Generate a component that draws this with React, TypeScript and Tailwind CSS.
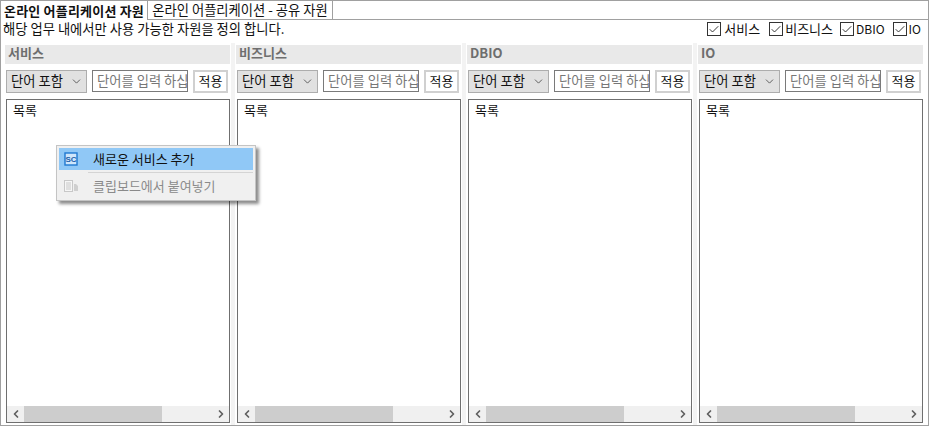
import React from "react";
import { ChevronDown, ChevronLeft, ChevronRight, Check } from "lucide-react";

const font = { fontFamily: '"Noto Sans CJK KR", "Liberation Sans", sans-serif' };

function Panel({ title }: { title: string }) {
  return (
    <div className="flex w-[225px] shrink-0 flex-col">
      <div className="flex h-[19px] items-center bg-[#e9e9e9] pb-[3px] pl-[3px] text-[13px] font-bold text-[#6e6e6e]">{title}</div>
      <div className="mt-[6px] flex h-[23px] pl-px">
        <div className="flex w-[81px] items-center justify-between border border-[#adadad] bg-[#e1e1e1] pb-px pl-[4px] pr-[3px] text-[13.3px] text-[#111]">
          <span>단어 포함</span>
          <ChevronDown size={13} strokeWidth={1.5} className="text-[#444]" />
        </div>
        <input
          readOnly
          placeholder="단어를 입력 하십시오"
          className="ml-[5px] h-[22px] w-[96px] border border-[#7a7a7a] bg-white pb-px pl-[4px] text-[13.3px] placeholder:text-[#777]"
        />
        <div className="ml-[5px] flex h-[23px] w-[35px] items-center justify-center border-2 border-[#d0d0d0] bg-white pb-px text-[13px] text-[#111]">적용</div>
      </div>
      <div className="mt-[6px] ml-px flex h-[324px] w-[224px] flex-col border border-[#6f6f6f] bg-white">
        <div className="flex-1 pl-[6px] pt-px text-[13px] leading-[18px] text-[#111]">목록</div>
        <div className="flex h-[16px] items-center bg-[#f0f0f0]">
          <div className="flex h-full w-[17px] items-center justify-center"><ChevronLeft size={12} strokeWidth={3.5} className="text-[#606060]" /></div>
          <div className="h-full w-[138px] bg-[#cdcdcd]" />
          <div className="flex-1" />
          <div className="flex h-full w-[17px] items-center justify-center"><ChevronRight size={12} strokeWidth={3.5} className="text-[#606060]" /></div>
        </div>
      </div>
    </div>
  );
}

function Sash() {
  return (
    <div className="flex w-[6px] shrink-0 justify-center">
      <div className="-mt-[2px] h-[382px] w-[4px] bg-[#f3f3f3]" />
    </div>
  );
}

function Cb({ label, className, labelClass }: { label: string; className?: string; labelClass: string }) {
  return (
    <div className={`flex items-center ${className ?? ""}`}>
      <div className="flex h-[14px] w-[14px] items-center justify-center border border-[#333] bg-white">
        <Check size={13} strokeWidth={1.8} className="text-[#222]" />
      </div>
      <span className={labelClass}>{label}</span>
    </div>
  );
}

export default function App() {
  return (
    <div style={font} className="relative h-[426px] w-[929px] overflow-hidden border-x border-b border-[#a0a0a0] bg-white">
      <div className="flex h-[20px] border-b border-t border-[#a0a0a0]">
        <div className="flex h-[19px] w-[147px] items-center justify-center border-r border-[#a0a0a0] bg-white text-[13px] font-bold tracking-[0.2px] text-[#111]">온라인 어플리케이션 자원</div>
        <div className="flex h-[18px] w-[185px] items-center justify-center border-r border-[#a0a0a0] bg-white text-[13.3px] text-[#111]">온라인 어플리케이션 - 공유 자원</div>
      </div>
      <div className="mb-[7px] flex h-[18px] items-center justify-between">
        <span className="pl-[2px] text-[13.3px] text-[#111]">해당 업무 내에서만 사용 가능한 자원을 정의 합니다.</span>
        <div className="flex pr-[7px]">
          <Cb label="서비스" labelClass="ml-[3px] text-[13px] text-[#111]" />
          <Cb label="비즈니스" className="ml-[9px]" labelClass="ml-[2px] text-[13px] text-[#111]" />
          <Cb label="DBIO" className="ml-[7px]" labelClass="ml-[2px] text-[12px] text-[#111]" />
          <Cb label="IO" className="ml-[8px]" labelClass="ml-[2px] text-[12px] text-[#111]" />
        </div>
      </div>
      <div className="flex pl-[4px]">
        <Panel title="서비스" />
        <Sash />
        <Panel title="비즈니스" />
        <Sash />
        <Panel title="DBIO" />
        <Sash />
        <Panel title="IO" />
      </div>
      <div className="absolute left-[55px] top-[145px] w-[200px] border border-[#c4c4c4] bg-[#f0f0f0] p-[2px] shadow-[3px_3px_3px_rgba(0,0,0,0.45)]">
        <div className="flex h-[22px] items-center bg-[#90c8f6] pb-px text-[13px] text-[#111]">
          <svg width="14" height="14" viewBox="0 0 14 14" className="ml-[5px]">
            <rect x="1" y="1" width="12" height="12" fill="#cfe6fb" stroke="#1f78d1" strokeWidth="1.4" />
            <text x="7" y="10" textAnchor="middle" fontSize="8" fontWeight="700" fill="#1a5fa8" fontFamily="Liberation Sans">SC</text>
          </svg>
          <span className="ml-[15px]">새로운 서비스 추가</span>
        </div>
        <div className="ml-[29px] mt-[2px] h-px bg-[#d4d4d4]" />
        <div className="flex h-[25px] items-center text-[13px] text-[#8a8a8a]">
          <svg width="16" height="14" viewBox="0 0 16 14" className="ml-[4px]">
            <rect x="1.5" y="1.5" width="8" height="11" fill="#f6f6f6" stroke="#c8c8c8" />
            <path d="M3 4h5M3 6h5M3 8h5M3 10h5" stroke="#c8c8c8" />
            <path d="M11 5h2l2 2v5h-4z" fill="#cfcfcf" />
          </svg>
          <span className="ml-[14px]">클립보드에서 붙여넣기</span>
        </div>
      </div>
    </div>
  );
}
